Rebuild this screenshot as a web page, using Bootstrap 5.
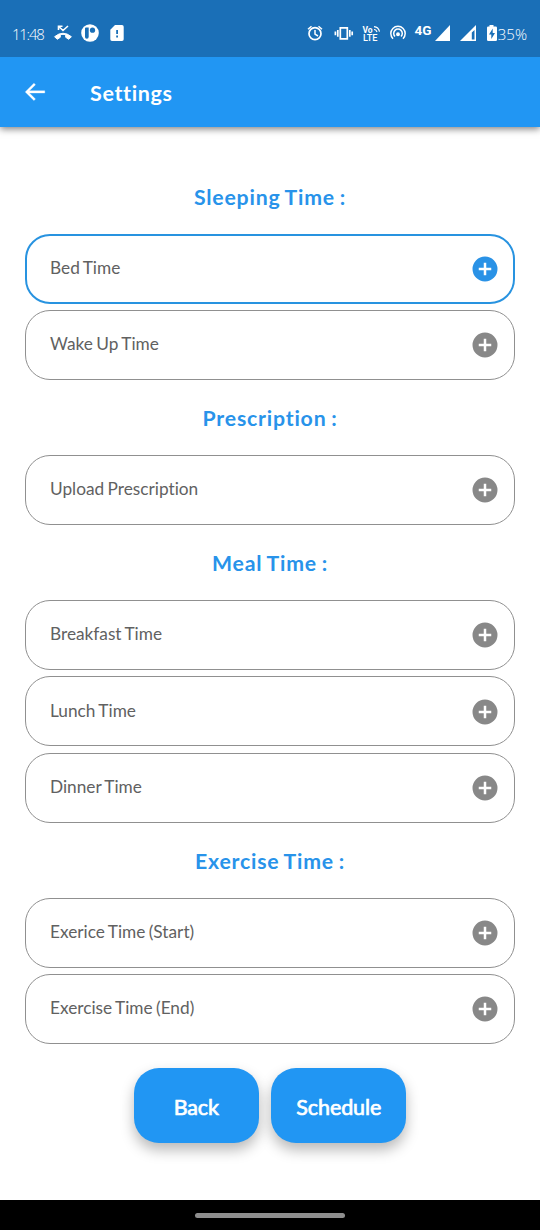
<!DOCTYPE html>
<html lang="en">
<head>
<meta charset="utf-8">
<meta name="viewport" content="width=device-width, initial-scale=1">
<title>Settings</title>
<link href="https://cdn.jsdelivr.net/npm/bootstrap@5.3.0/dist/css/bootstrap.min.css" rel="stylesheet">
<style>
  body { font-family: Lato, "Open Sans", sans-serif; color: #616161; background: #fff; }
  svg { display: block; flex: none; }
  .screen { height: 1230px; }
  .statusbar { height: 57px; padding: 9px 13px 0 12px; background: #1a6fb7; font: 300 15px/20px "Open Sans", sans-serif; z-index: 2; }
  .clock { letter-spacing: -1.25px; padding-top: 1px; }
  .battery { padding-top: 1px; }
  .appbar { height: 70px; padding: 3px 22px 0; background: #2196f3; box-shadow: 0 2px 7px rgba(0,0,0,.5); z-index: 1; }
  .appbar h1 { font-size: 21.5px; font-weight: 700; letter-spacing: .65px; margin-left: 42px; }
  .content { padding: 31.75px 25px 0; }
  .section-title { height: 75px; padding-top: 24px; line-height: 28px; font-size: 21.25px; font-weight: 700; letter-spacing: .8px; word-spacing: -1.2px; color: #2893ea; }
  .fields { gap: 6.25px; }
  .field { height: 70px; padding: 0 14.5px 1.5px 24px; border: 1px solid #909090; border-radius: 25px; background: #fff; color: #616161; font-size: 17.25px; word-spacing: -1px; font-variant-ligatures: none; text-align: left; }
  .field svg { color: #888; margin-top: 2px; }
  .field.selected { border: 2.5px solid #2893e0; padding: 0 13.5px 2px 23px; }
  .field.selected svg { color: #2a92e6; }
  .actions { gap: 12.5px; padding-top: 24.5px; }
  .action { height: 75px; border: 0; border-radius: 25px; background: #2196f3; color: #fff; font-size: 21.5px; letter-spacing: -.1px; -webkit-text-stroke: .7px #fff; padding: 3px 0 0; box-shadow: 0 7px 14px rgba(0,0,0,.28); }
  .action-back { width: 125px; }
  .action-schedule { width: 135px; }
  .navpill-bar { height: 30px; background: #000; }
  .pill { width: 150px; height: 5px; background: #8e8e8e; }
</style>
</head>
<body>
<svg class="d-none" xmlns="http://www.w3.org/2000/svg">
  <symbol id="add" viewBox="0 0 24 24"><path fill="currentColor" d="M12 2a10 10 0 1 0 0 20 10 10 0 0 0 0-20zm5 11h-4v4h-2v-4H7v-2h4V7h2v4h4v2z"/></symbol>
</svg>
<div class="screen d-flex flex-column overflow-hidden">
  <div class="statusbar d-flex justify-content-between align-items-center text-white position-relative flex-shrink-0">
    <div class="d-flex align-items-center">
      <span class="clock">11:48</span>
      <svg width="20" height="20" viewBox="0 0 20 20" style="margin:-2px 0 0 9px"><path d="M1.600 14.700Q10 7.800 18.400 14.700L15.800 17.300 12.700 15.300V12.700Q10 12 7.300 12.700V15.300L4.200 17.300Z" fill="#fff" stroke="#fff" stroke-linejoin="round"/><path d="M5.500 8V4.200h4M5.800 4.500 10 8.500 15 4" fill="none" stroke="#fff" stroke-width="1.600"/></svg>
      <svg width="20" height="20" viewBox="0 0 20 20" style="margin-left:7.500px"><circle cx="10" cy="10" r="8.800" fill="#fff"/><path d="M5 5.500q0-1 1-1h2.700v9.200q0 2-1.900 2T5 13.700z" fill="#1a6fb7"/><circle cx="12.500" cy="7.200" r="2.600" fill="#1a6fb7"/></svg>
      <svg class="ms-2" width="18" height="20" viewBox="0 0 18 20"><path d="M7 2h7a1.700 1.700 0 0 1 1.700 1.700v12.600A1.700 1.700 0 0 1 14 18H4a1.700 1.700 0 0 1-1.700-1.700V6.700z" fill="#fff"/><path d="M8.200 7h1.800v4H8.200zM8.200 12.500h1.800v2H8.200z" fill="#1a6fb7"/></svg>
    </div>
    <div class="d-flex align-items-center">
      <svg width="154" height="26" viewBox="305 20 154 26" fill="none" stroke="#fff">
        <circle cx="315" cy="33.700" r="6" stroke-width="1.700"/><path d="M315 30v4.200l3 1.800M308 29.300l3.500-3M322 29.300l-3.500-3" stroke-width="1.500"/>
        <path d="M340.300 27.800h7v11h-7zM337.800 30v6.800M349.800 30v6.800M335.400 31.500v3.800M352.200 31.500v3.800" stroke-width="1.700"/>
        <g fill="#fff" stroke="none" font-family="Roboto, sans-serif" font-weight="700"><text x="362.500" y="32.700" font-size="8.500">Vo</text><text x="363" y="41" font-size="9" font-weight="500" textLength="14.500" lengthAdjust="spacingAndGlyphs">LTE</text><text x="414.500" y="34.500" font-size="12" textLength="17" lengthAdjust="spacingAndGlyphs">4G</text></g>
        <path d="M374 26.700q4.500.3 5.500 5M374 29.500q2.200 0 3 2.500" stroke-width="1.200"/>
        <g stroke-width="1.500"><path d="M393 38.700a7.200 7.200 0 1 1 10 0M395 36.500a4.300 4.300 0 1 1 6 0"/><circle cx="398" cy="34.300" r="1.200" fill="#fff"/></g>
        <path d="M450 25v16h-15z" fill="#fff" stroke="none"/>
      </svg>
      <svg width="27" height="26" viewBox="459 20 27 26"><path d="M476 25v16h-16zM474.500 30v9.500h-2.700v-7z" fill="#fff" fill-rule="evenodd"/></svg>
      <svg width="12" height="26" viewBox="486 20 12 26"><path d="M489.500 25h4v1.500h2.200q1.300 0 1.300 1.300v12q0 1.300-1.300 1.300h-7.400q-1.300 0-1.300-1.300v-12q0-1.300 1.300-1.300h1.200z" fill="#fff"/><path d="M492.700 28.500l-3.700 6h2.300v4.500l3.700-6h-2.300z" fill="#1a6fb7"/></svg>
      <span class="battery">35%</span>
    </div>
  </div>
  <header class="appbar d-flex align-items-center text-white position-relative flex-shrink-0">
    <svg width="26" height="26" viewBox="0 0 24 24" style="margin-top:-3px"><path fill="#fff" d="M21 10.900H6.830l5.590-5.590L11 3.900l-8 8 8 8 1.410-1.410L6.830 12.900H21z" stroke="#fff" stroke-width=".3"/></svg>
    <h1 class="mb-0">Settings</h1>
  </header>
  <main class="content flex-grow-1">
    <h2 class="section-title text-center mb-0">Sleeping Time :</h2>
    <div class="fields d-flex flex-column">
      <button class="field selected d-flex align-items-center justify-content-between w-100">Bed Time<svg width="30" height="30"><use href="#add"/></svg></button>
      <button class="field d-flex align-items-center justify-content-between w-100">Wake Up Time<svg width="30" height="30"><use href="#add"/></svg></button>
    </div>
    <h2 class="section-title text-center mb-0">Prescription :</h2>
    <div class="fields d-flex flex-column">
      <button class="field d-flex align-items-center justify-content-between w-100">Upload Prescription<svg width="30" height="30"><use href="#add"/></svg></button>
    </div>
    <h2 class="section-title text-center mb-0">Meal Time :</h2>
    <div class="fields d-flex flex-column">
      <button class="field d-flex align-items-center justify-content-between w-100">Breakfast Time<svg width="30" height="30"><use href="#add"/></svg></button>
      <button class="field d-flex align-items-center justify-content-between w-100">Lunch Time<svg width="30" height="30"><use href="#add"/></svg></button>
      <button class="field d-flex align-items-center justify-content-between w-100">Dinner Time<svg width="30" height="30"><use href="#add"/></svg></button>
    </div>
    <h2 class="section-title text-center mb-0">Exercise Time :</h2>
    <div class="fields d-flex flex-column">
      <button class="field d-flex align-items-center justify-content-between w-100">Exerice Time (Start)<svg width="30" height="30"><use href="#add"/></svg></button>
      <button class="field d-flex align-items-center justify-content-between w-100">Exercise Time (End)<svg width="30" height="30"><use href="#add"/></svg></button>
    </div>
    <div class="actions d-flex justify-content-center">
      <button class="action action-back">Back</button>
      <button class="action action-schedule">Schedule</button>
    </div>
  </main>
  <footer class="navpill-bar d-flex justify-content-center align-items-center flex-shrink-0">
    <div class="pill rounded-pill"></div>
  </footer>
</div>
<script src="https://cdn.jsdelivr.net/npm/bootstrap@5.3.0/dist/js/bootstrap.bundle.min.js"></script>
</body>
</html>
